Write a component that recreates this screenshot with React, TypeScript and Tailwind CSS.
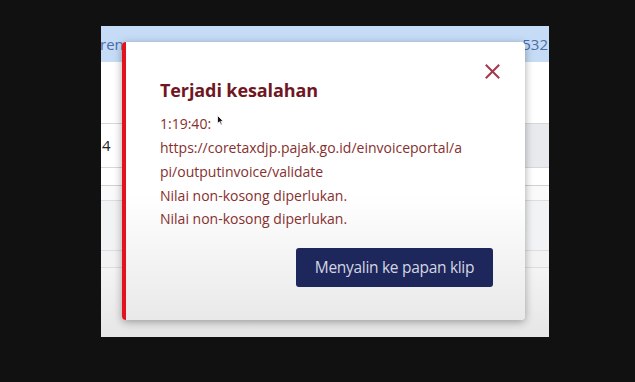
import React from 'react';

const font = { fontFamily: '"Open Sans", "Noto Sans", sans-serif' };

const Cursor = () => (
  <svg width="7" height="11" viewBox="0 0 7 11" className="absolute left-[57px] top-[3px]">
    <path d="M0.5 0.5 L0.5 8.5 L2.5 6.8 L4 10 L5.2 9.4 L3.8 6.3 L6.3 6.3 Z" fill="#111" stroke="#fff" strokeWidth="0.8" />
  </svg>
);

const ErrorModal: React.FC = () => (
  <div className="absolute left-[21px] top-[16px] w-[403px] h-[278px] rounded-[4px] border-l-[4px] border-[#e3121c] bg-gradient-to-b from-white from-55% to-[#e9e9e9] shadow-[0_2px_8px_rgba(0,0,0,0.35)] flex flex-col pl-[34px] pr-[32px]">
    <button className="absolute right-[25px] top-[22px] text-[#a3384c]">
      <svg width="15" height="15" viewBox="0 0 15 15">
        <path d="M1.5 1.5 L13.5 13.5 M13.5 1.5 L1.5 13.5" stroke="currentColor" strokeWidth="2" strokeLinecap="square" />
      </svg>
    </button>
    <h2 className="mt-[37px] text-[18px] font-bold text-[#701622] leading-[22px] tracking-[-0.1px]">Terjadi kesalahan</h2>
    <div className="relative mt-[11px] text-[14px] leading-[24px] text-[#86302e]">
      <Cursor />
      <div className="h-[24px]">1:19:40:</div>
      <div className="h-[24px]">https://coretaxdjp.pajak.go.id/einvoiceportal/a</div>
      <div className="h-[24px]">pi/outputinvoice/validate</div>
      <div className="h-[23px]">Nilai non-kosong diperlukan.</div>
      <div className="h-[23px]">Nilai non-kosong diperlukan.</div>
    </div>
    <div className="flex justify-end mt-[18px]">
      <button className="w-[197px] h-[39px] rounded-[3px] bg-[#1e275c] text-[#d3d6e2] text-[15.5px] tracking-[-0.3px]">
        Menyalin ke papan klip
      </button>
    </div>
  </div>
);

export default function App() {
  return (
    <div className="w-[635px] h-[382px] bg-[#111111] pl-[101px] pt-[26px] overflow-hidden" style={font}>
      <div className="relative w-[448px] h-[311px] bg-white overflow-hidden flex flex-col">
        {/* header band */}
        <div className="h-[36px] bg-[#c6dcf6] flex justify-between items-center text-[15px] text-[#4a6ea8]">
          <span className="-ml-[1px]">ren</span>
          <span className="mr-[1px]">532</span>
        </div>
        <div className="h-[61px] bg-white" />
        <div className="h-[44px] border-t border-[#d6d8dc] flex">
          <div className="flex-1 bg-white flex items-center text-[15px] text-[#222]">
            <span className="ml-[1px]">4</span>
          </div>
          <div className="w-[34px] bg-[#e9eaee] flex items-center text-[15px] text-[#777]">
            <span className="ml-[1px]">n</span>
          </div>
        </div>
        <div className="h-[18px] border-t border-[#d6d8dc] bg-white" />
        <div className="h-[15px] border-t border-[#cfd1d5] bg-[#fafafa]" />
        <div className="h-[50px] border-t border-[#dcdde0] bg-[#f2f3f5]" />
        <div className="h-[17px] border-t border-[#dcdde0] bg-[#f3f3f4]" />
        <div className="flex-1 border-t border-[#dcdde0] bg-gradient-to-b from-[#f4f4f5] to-[#e6e6e6]" />
        <ErrorModal />
      </div>
    </div>
  );
}
